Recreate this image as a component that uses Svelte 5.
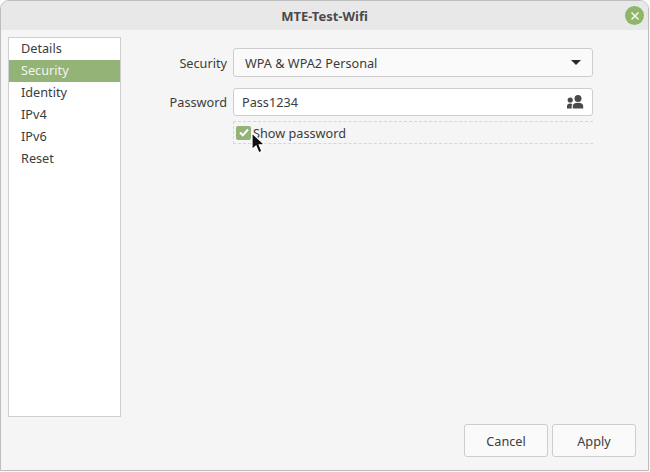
<script>
  const pages = ['Details', 'Security', 'Identity', 'IPv4', 'IPv6', 'Reset'];
  let selected = 'Security';
  let showPassword = true;
</script>

<div class="window">
  <header class="titlebar">
    <span class="title">MTE-Test-Wifi</span>
    <button class="close" aria-label="Close">
      <svg width="10" height="10" viewBox="0 0 10 10">
        <path d="M1.500 1.500l7 7M8.500 1.500l-7 7" stroke="#f2f6ee" stroke-width="1.600" fill="none" />
      </svg>
    </button>
  </header>

  <div class="body">
    <ul class="sidebar">
      {#each pages as page}
        <li class:selected={page === selected}>{page}</li>
      {/each}
    </ul>

    <div class="content">
      <div class="form">
        <div class="row">
          <span class="label">Security</span>
          <div class="combo">
            <span>WPA &amp; WPA2 Personal</span>
            <svg width="10" height="5" viewBox="0 0 10 5"><path d="M0 0h10L5 5z" fill="#2a2a2a" /></svg>
          </div>
        </div>
        <div class="row password">
          <span class="label">Password</span>
          <div class="entry">
            <span>Pass1234</span>
            <svg width="17" height="14" viewBox="0 0 17 14" fill="#4a4a4a">
              <circle cx="3.200" cy="5" r="2.600" />
              <path d="M0 13.500V11c0-1.700 1.300-2.600 3.200-2.600.900 0 1.700.200 2.200.600-.500.500-.700 1.200-.700 2v2.500z" />
              <circle cx="11" cy="3.600" r="3.500" />
              <path d="M5.800 13.500v-2.600c0-2.100 2.300-3.200 5.200-3.200s5.200 1.100 5.200 3.200v2.600z" />
            </svg>
          </div>
        </div>
        <div class="row">
          <span class="label"></span>
          <div class="check-row">
            <span class="check" class:on={showPassword}>
              <svg width="10" height="9" viewBox="0 0 10 9">
                <path d="M1 4.500l2.800 2.800L9 1.500" stroke="#fff" stroke-width="2" fill="none" />
              </svg>
            </span>
            <span>Show password</span>
            <svg class="cursor" width="15" height="22" viewBox="0 0 15 22">
              <path d="M1 1v16.500l4-3.500 2.800 6.800 3.200-1.400-2.800-6.500 5.300-.3z" fill="#111" stroke="#fff" stroke-width="1.200" />
            </svg>
          </div>
        </div>
      </div>

      <div class="actions">
        <button>Cancel</button>
        <button>Apply</button>
      </div>
    </div>
  </div>
</div>

<style>
  :global(body) {
    margin: 0;
    background: #fafafa;
  }

  .window {
    width: 649px;
    height: 471px;
    box-sizing: border-box;
    display: flex;
    flex-direction: column;
    background: #f5f5f5;
    border: 1px solid #bdbdbd;
    border-radius: 9px 9px 0 0;
    font-family: "Noto Sans", sans-serif;
    font-size: 12.7px;
    color: #3c3c3c;
    overflow: hidden;
  }

  .titlebar {
    height: 29px;
    flex: none;
    position: relative;
    display: flex;
    align-items: center;
    justify-content: center;
    background: #e8e8e8;
  }

  .title {
    font-weight: 700;
    font-size: 13px;
    color: #4a4a4a;
  }

  .close {
    position: absolute;
    right: 4px;
    top: 5px;
    width: 19px;
    height: 19px;
    padding: 0;
    border: none;
    border-radius: 50%;
    background: #8fb569;
    display: flex;
    align-items: center;
    justify-content: center;
  }

  .body {
    flex: 1;
    display: flex;
    padding: 7px 12px 13px 7px;
    min-height: 0;
  }

  .sidebar {
    list-style: none;
    margin: 0 0 40px;
    padding: 0;
    width: 113px;
    box-sizing: border-box;
    background: #fff;
    border: 1px solid #cfcfcf;
    flex: none;
  }

  .sidebar li {
    height: 22px;
    line-height: 20px;
    padding-left: 12px;
  }

  .sidebar li.selected {
    background: #94b376;
    color: #f2f5ee;
  }

  .content {
    flex: 1;
    display: flex;
    flex-direction: column;
    justify-content: space-between;
  }

  .form {
    padding-top: 11px;
    display: flex;
    flex-direction: column;
  }

  .row {
    display: flex;
    align-items: center;
    gap: 6px;
  }

  .password {
    margin-top: 11px;
    margin-bottom: 5px;
  }

  .label {
    width: 106px;
    text-align: right;
    flex: none;
  }

  .combo,
  .entry {
    width: 360px;
    box-sizing: border-box;
    border: 1px solid #cdcdcd;
    border-radius: 3px;
    display: flex;
    align-items: center;
    justify-content: space-between;
  }

  .combo {
    height: 29px;
    background: #fafafa;
    padding: 0 11px;
  }

  .entry {
    height: 28px;
    background: #fff;
    padding: 0 8px;
  }

  .check-row {
    position: relative;
    width: 360px;
    height: 23px;
    box-sizing: border-box;
    display: flex;
    align-items: center;
    gap: 2px;
    padding-left: 2px;
    border: 1px dashed #d6d6d6;
    border-right: none;
  }

  .check {
    width: 15px;
    height: 14px;
    border-radius: 2px;
    background: #ccc;
    display: flex;
    align-items: center;
    justify-content: center;
  }

  .check.on {
    background: #94b376;
  }

  .cursor {
    position: absolute;
    left: 17px;
    top: 10px;
  }

  .actions {
    display: flex;
    justify-content: flex-end;
    gap: 4px;
  }

  .actions button {
    width: 84px;
    height: 33px;
    box-sizing: border-box;
    border: 1px solid #cdcdcd;
    border-radius: 3px;
    background: #fafafa;
    color: #3c3c3c;
    font: inherit;
  }
</style>
